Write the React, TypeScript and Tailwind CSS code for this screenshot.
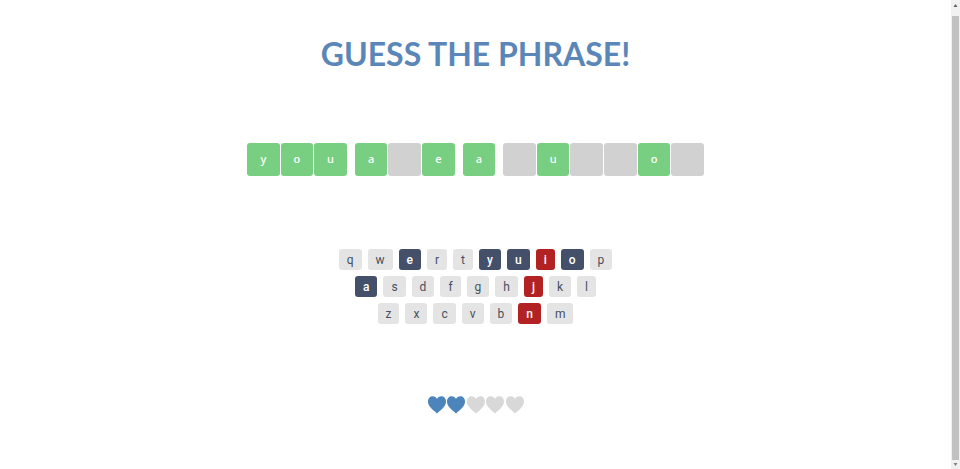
type KeyState = "idle" | "chosen" | "wrong";

const phrase = ["you", "a e", "a", " u  o "];

const keyRows = ["qwertyuiop", "asdfghjkl", "zxcvbnm"];
const chosen = "eyuoa";
const wrong = "ijn";

const keyStyles: Record<KeyState, string> = {
  idle: "bg-[#e4e4e4] text-[#455061]",
  chosen: "bg-[#445069] font-medium text-white",
  wrong: "bg-[#b22222] font-medium text-white",
};

function keyState(letter: string): KeyState {
  if (chosen.includes(letter)) return "chosen";
  if (wrong.includes(letter)) return "wrong";
  return "idle";
}

function Tile({ letter }: { letter: string }) {
  const guessed = letter !== " ";
  return (
    <li
      className={`flex h-[33px] min-w-0 flex-1 justify-center rounded-[3px] pt-2 text-[11px] leading-4 font-medium text-white ${
        guessed ? "bg-[#78cf82]" : "bg-[#d1d1d1]"
      }`}
    >
      {guessed ? letter : ""}
    </li>
  );
}

function Phrase() {
  return (
    <ul className="mt-[69px] flex w-full max-w-[457px] gap-px font-['Noto_Sans','Open_Sans',sans-serif]" aria-label="Phrase">
      {phrase.flatMap((word, w) => [
        ...(w > 0 ? [<li key={`space-${w}`} className="w-[6px]" aria-hidden="true" />] : []),
        ...word.split("").map((letter, i) => <Tile key={`${w}-${i}`} letter={letter} />),
      ])}
    </ul>
  );
}

function Keyboard() {
  return (
    <div className="mt-[73px] flex flex-col items-center gap-[6px] font-['Roboto',sans-serif]">
      {keyRows.map((row) => (
        <div key={row} className="flex gap-[6px]">
          {row.split("").map((letter) => (
            <button
              key={letter}
              type="button"
              className={`h-[21px] min-w-[19px] rounded-[3px] px-2 text-center text-[12px] leading-4 ${keyStyles[keyState(letter)]}`}
            >
              {letter}
            </button>
          ))}
        </div>
      ))}
    </div>
  );
}

function Heart({ full }: { full: boolean }) {
  return (
    <svg viewBox="0 0 18 18" className={`h-[18px] w-[18px] ${full ? "fill-[#4c85bc]" : "fill-[#d8d8d8]"}`} aria-hidden="true">
      <path d="M9 17.5C6.6 15.2 3.8 13.2 1.8 10.5C.5 8.7 0 7.2 0 5.2C0 2.3 2.1.2 4.7.2C6.7.2 8.2 1.2 9 3C9.8 1.2 11.3.2 13.3.2C15.9.2 18 2.3 18 5.2C18 7.2 17.5 8.7 16.2 10.5C14.2 13.2 11.4 15.2 9 17.5Z" />
    </svg>
  );
}

function ScrollBar() {
  return (
    <div className="flex w-[9px] flex-col items-center bg-[#f1f1f1]" aria-hidden="true">
      <svg viewBox="0 0 5 3" className="mt-[4px] mb-[9px] h-[3px] w-[5px] fill-[#606060]">
        <path d="M2.5 0L4.5 3H.5Z" />
      </svg>
      <div className="w-[7px] flex-1 bg-[#c1c1c1]" />
      <svg viewBox="0 0 5 3" className="my-[3px] h-[3px] w-[5px] fill-[#808080]">
        <path d="M2.5 3L4.5 0H.5Z" />
      </svg>
    </div>
  );
}

export default function App() {
  return (
    <div className="flex h-screen overflow-hidden bg-white">
      <main className="flex min-w-0 flex-1 flex-col items-center pt-[34px]">
        <h1 className="text-[32px] leading-[40px] font-bold text-[#5b87b8] uppercase font-['Lato',sans-serif]">
          Guess the phrase!
        </h1>
        <Phrase />
        <Keyboard />
        <div className="mt-[72px] flex w-24 justify-between" role="img" aria-label="2 of 5 lives left">
          {[0, 1, 2, 3, 4].map((life) => (
            <Heart key={life} full={life < 2} />
          ))}
        </div>
      </main>
      <ScrollBar />
    </div>
  );
}
